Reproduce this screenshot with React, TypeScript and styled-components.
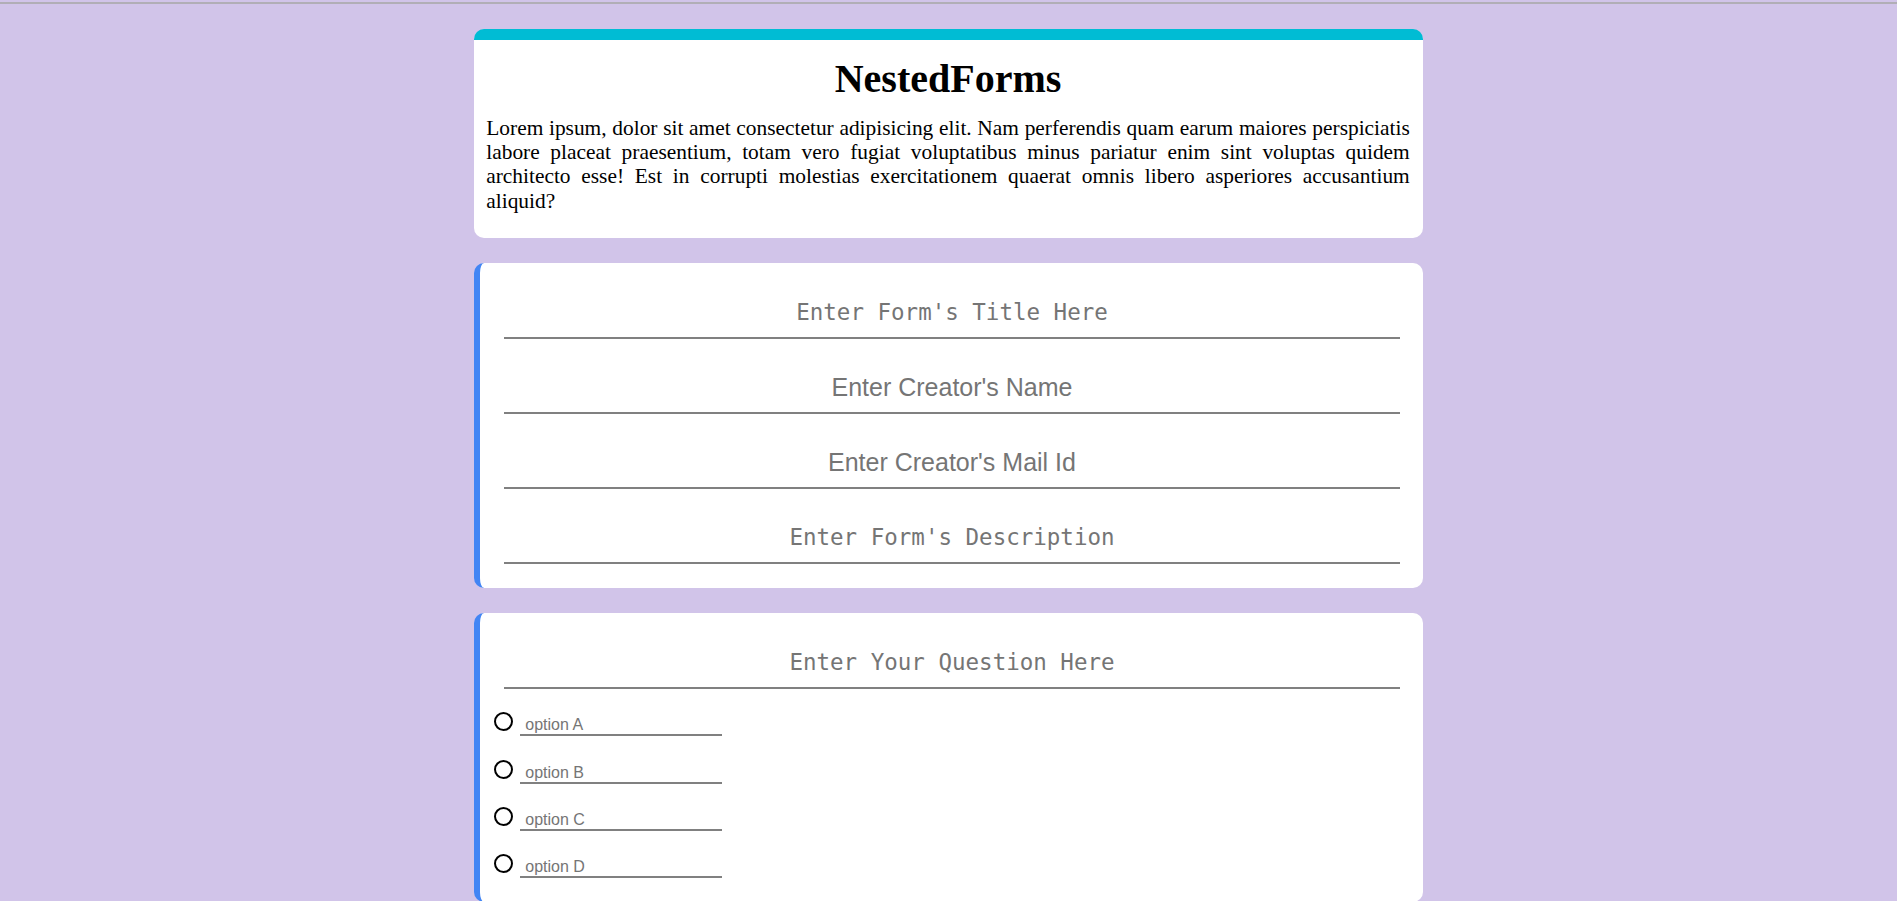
import React from "react";
import styled, { createGlobalStyle } from "styled-components";

const GlobalStyle = createGlobalStyle`
  html, body {
    margin: 0;
    padding: 0;
    background: #d1c4e9;
  }
  * { box-sizing: border-box; }
`;

const Page = styled.div`
  display: flex;
  flex-direction: column;
  align-items: center;
  gap: 25px;
  padding: 2px 0 24px;
  min-height: 100vh;
  background: #d1c4e9;
`;

const TopRule = styled.div`
  align-self: stretch;
  height: 2px;
  background: #b1aeb6;
`;

const Card = styled.section<{ $accent: "top" | "left" }>`
  width: 50%;
  background: #ffffff;
  border-radius: 10px;
  ${(p) =>
    p.$accent === "top"
      ? "border-top: 11px solid #00bcd4; padding: 0 13px 12px 12px;"
      : "border-left: 6px solid #4285f4; padding: 24px 23px 24px 24px;"}
`;

const Title = styled.h1`
  margin: 15px 0 14px;
  font-family: "Liberation Serif", "Times New Roman", serif;
  font-size: 40px;
  font-weight: bold;
  text-align: center;
  color: #000;
  line-height: normal;
`;

const Intro = styled.p`
  margin: 0 0 13.5px;
  font-family: "Liberation Serif", "Times New Roman", serif;
  font-size: 21.4px;
  line-height: 24.2px;
  text-align: justify;
  color: #000;
`;

const Fields = styled.div`
  display: flex;
  flex-direction: column;
  gap: 23px;
`;

const LineInput = styled.input<{ $mono?: boolean }>`
  display: block;
  width: 100%;
  height: 52px;
  padding: 0;
  border: none;
  border-bottom: 2px solid #808080;
  outline: none;
  background: transparent;
  text-align: center;
  font-family: ${(p) =>
    p.$mono ? '"DejaVu Sans Mono", "Liberation Mono", monospace' : '"Liberation Sans", Arial, sans-serif'};
  font-size: ${(p) => (p.$mono ? "22.5px" : "25px")};
  color: #333;
  &::placeholder {
    color: #757575;
  }
`;

const Options = styled.div`
  display: flex;
  flex-direction: column;
  gap: 23.4px;
  margin: 23px 0 0 -10px;
`;

const OptionRow = styled.label`
  display: flex;
  align-items: flex-end;
  gap: 7px;
`;

const Radio = styled.input`
  appearance: none;
  -webkit-appearance: none;
  width: 19px;
  height: 19px;
  margin: 0 0 5px;
  border: 2px solid #000;
  border-radius: 50%;
  background: #fff;
  flex: none;
`;

const OptionInput = styled.input`
  width: 202px;
  height: 20px;
  padding: 0 5px;
  border: none;
  border-bottom: 2px solid #808080;
  outline: none;
  background: transparent;
  font-family: "Liberation Sans", Arial, sans-serif;
  font-size: 16px;
  color: #333;
  &::placeholder {
    color: #757575;
  }
`;

const options = ["option A", "option B", "option C", "option D"];

export default function App() {
  return (
    <>
      <GlobalStyle />
      <Page>
        <TopRule />
        <Card $accent="top">
          <Title>NestedForms</Title>
          <Intro>
            Lorem ipsum, dolor sit amet consectetur adipisicing elit. Nam perferendis quam earum maiores
            perspiciatis labore placeat praesentium, totam vero fugiat voluptatibus minus pariatur enim sint
            voluptas quidem architecto esse! Est in corrupti molestias exercitationem quaerat omnis libero
            asperiores accusantium aliquid?
          </Intro>
        </Card>
        <Card $accent="left">
          <Fields>
            <LineInput $mono placeholder="Enter Form's Title Here" />
            <LineInput placeholder="Enter Creator's Name" />
            <LineInput placeholder="Enter Creator's Mail Id" />
            <LineInput $mono placeholder="Enter Form's Description" />
          </Fields>
        </Card>
        <Card $accent="left">
          <LineInput $mono placeholder="Enter Your Question Here" />
          <Options>
            {options.map((o) => (
              <OptionRow key={o}>
                <Radio type="radio" name="answer" />
                <OptionInput placeholder={o} />
              </OptionRow>
            ))}
          </Options>
        </Card>
      </Page>
    </>
  );
}
